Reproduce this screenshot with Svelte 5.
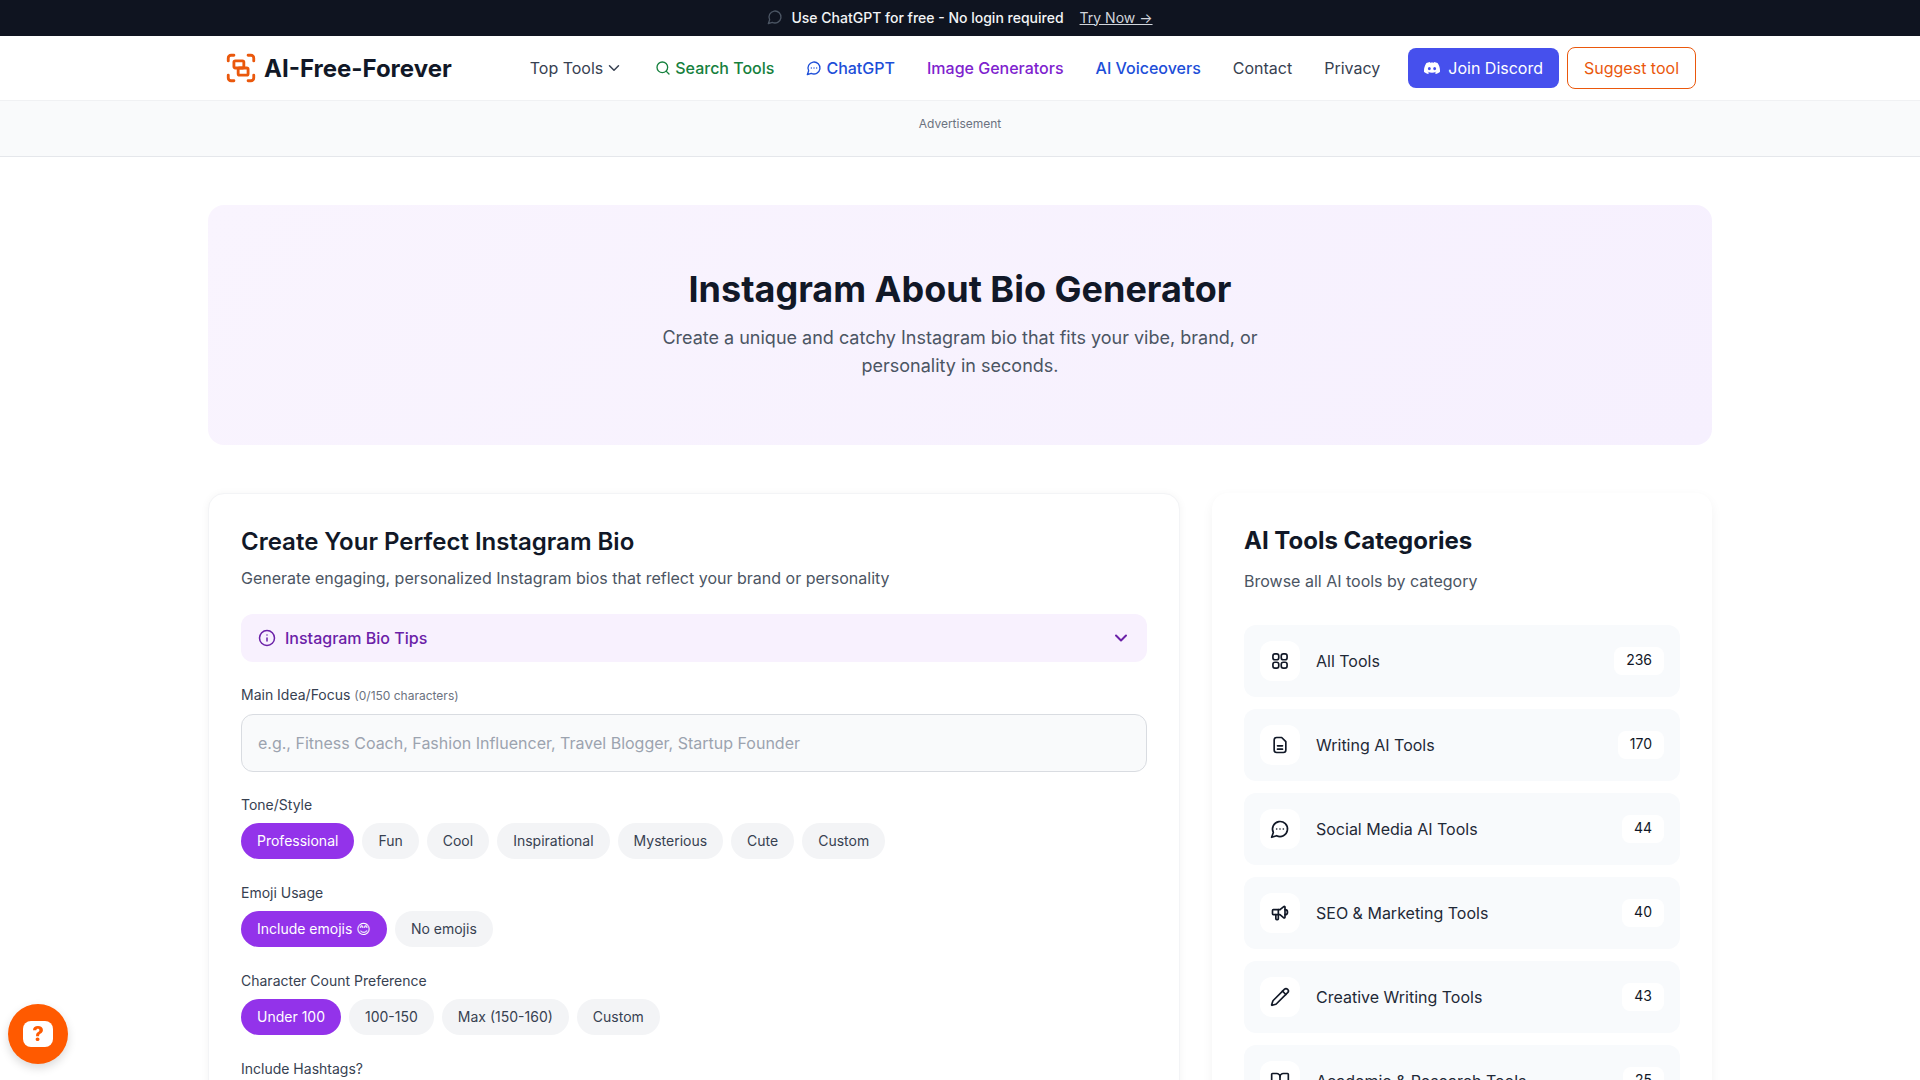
<script>
  const groups = [
    { label: 'Tone/Style', options: ['Professional', 'Fun', 'Cool', 'Inspirational', 'Mysterious', 'Cute', 'Custom'] },
    { label: 'Emoji Usage', options: ['Include emojis 😊', 'No emojis'] },
    { label: 'Character Count Preference', options: ['Under 100', '100-150', 'Max (150-160)', 'Custom'] },
    { label: 'Include Hashtags?', options: ['Yes', 'No'] }
  ];

  const categories = [
    { name: 'All Tools', count: 236, icon: 'grid' },
    { name: 'Writing AI Tools', count: 170, icon: 'file' },
    { name: 'Social Media AI Tools', count: 44, icon: 'chat' },
    { name: 'SEO & Marketing Tools', count: 40, icon: 'megaphone' },
    { name: 'Creative Writing Tools', count: 43, icon: 'pencil' },
    { name: 'Academic & Research Tools', count: 25, icon: 'book' }
  ];
</script>

<div class="page">
  <div class="banner">
    <svg class="banner-icon" viewBox="0 0 24 24" fill="none" stroke="currentColor" stroke-width="2" stroke-linecap="round" stroke-linejoin="round"><path d="M7.9 20A9 9 0 1 0 4 16.1L2 22Z" /></svg>
    <span>Use ChatGPT for free - No login required</span>
    <a href="#try">Try Now →</a>
  </div>

  <header class="nav">
    <div class="nav-inner">
      <a class="logo" href="#home">
        <svg viewBox="0 0 24 24" fill="none" stroke="#ea580c" stroke-width="2" stroke-linecap="round" stroke-linejoin="round"><path d="M3 7V5c0-1.1.9-2 2-2h2" /><path d="M17 3h2c1.1 0 2 .9 2 2v2" /><path d="M21 17v2c0 1.1-.9 2-2 2h-2" /><path d="M7 21H5c-1.1 0-2-.9-2-2v-2" /><rect width="7" height="5" x="7" y="7" rx="1" /><rect width="7" height="5" x="10" y="12" rx="1" /></svg>
        <span>AI-Free-Forever</span>
      </a>
      <nav class="links">
        <a href="#top" class="link tools">Top Tools
          <svg viewBox="0 0 24 24" fill="none" stroke="currentColor" stroke-width="2" stroke-linecap="round" stroke-linejoin="round"><path d="m6 9 6 6 6-6" /></svg>
        </a>
        <a href="#search" class="link strong green">
          <svg viewBox="0 0 24 24" fill="none" stroke="currentColor" stroke-width="2" stroke-linecap="round" stroke-linejoin="round"><circle cx="11" cy="11" r="8" /><path d="m21 21-4.3-4.3" /></svg>
          Search Tools
        </a>
        <a href="#chat" class="link strong blue">
          <svg viewBox="0 0 24 24" fill="none" stroke="currentColor" stroke-width="2" stroke-linecap="round" stroke-linejoin="round"><path d="M7.9 20A9 9 0 1 0 4 16.1L2 22Z" /><path d="M8 12h.01" /><path d="M12 12h.01" /><path d="M16 12h.01" /></svg>
          ChatGPT
        </a>
        <a href="#images" class="link strong purple">Image Generators</a>
        <a href="#voice" class="link strong blue">AI Voiceovers</a>
        <a href="#contact" class="link">Contact</a>
        <a href="#privacy" class="link">Privacy</a>
      </nav>
      <div class="actions">
        <a href="#discord" class="discord">
          <svg viewBox="0 0 24 24" fill="currentColor"><path d="M20.317 4.3698a19.7913 19.7913 0 00-4.8851-1.5152.0741.0741 0 00-.0785.0371c-.211.3753-.4447.8648-.6083 1.2495-1.8447-.2762-3.68-.2762-5.4868 0-.1636-.3933-.4058-.8742-.6177-1.2495a.077.077 0 00-.0785-.037 19.7363 19.7363 0 00-4.8852 1.515.0699.0699 0 00-.0321.0277C.5334 9.0458-.319 13.5799.0992 18.0578a.0824.0824 0 00.0312.0561c2.0528 1.5076 4.0413 2.4228 5.9929 3.0294a.0777.0777 0 00.0842-.0276c.4616-.6304.8731-1.2952 1.226-1.9942a.076.076 0 00-.0416-.1057c-.6528-.2476-1.2743-.5495-1.8722-.8923a.077.077 0 01-.0076-.1277c.1258-.0943.2517-.1923.3718-.2914a.0743.0743 0 01.0776-.0105c3.9278 1.7933 8.18 1.7933 12.0614 0a.0739.0739 0 01.0785.0095c.1202.099.246.1981.3728.2924a.077.077 0 01-.0066.1276 12.2986 12.2986 0 01-1.873.8914.0766.0766 0 00-.0407.1067c.3604.698.7719 1.3628 1.225 1.9932a.076.076 0 00.0842.0286c1.961-.6067 3.9495-1.5219 6.0023-3.0294a.077.077 0 00.0313-.0552c.5004-5.177-.8382-9.6739-3.5485-13.6604a.061.061 0 00-.0312-.0286zM8.02 15.3312c-1.1825 0-2.1569-1.0857-2.1569-2.419 0-1.3332.9555-2.4189 2.157-2.4189 1.2108 0 2.1757 1.0952 2.1568 2.419 0 1.3332-.9555 2.4189-2.1569 2.4189zm7.9748 0c-1.1825 0-2.1569-1.0857-2.1569-2.419 0-1.3332.9554-2.4189 2.1569-2.4189 1.2108 0 2.1757 1.0952 2.1568 2.419 0 1.3332-.946 2.4189-2.1568 2.4189Z" /></svg>
          Join Discord
        </a>
        <a href="#suggest" class="suggest">Suggest tool</a>
      </div>
    </div>
  </header>

  <div class="ad">Advertisement</div>

  <main class="container">
    <section class="hero">
      <h1>Instagram About Bio Generator</h1>
      <p>Create a unique and catchy Instagram bio that fits your vibe, brand, or personality in seconds.</p>
    </section>

    <div class="columns">
      <section class="card form">
        <h2>Create Your Perfect Instagram Bio</h2>
        <p class="lead">Generate engaging, personalized Instagram bios that reflect your brand or personality</p>

        <button class="tips">
          <span class="tips-title">
            <svg viewBox="0 0 24 24" fill="none" stroke="currentColor" stroke-width="2" stroke-linecap="round" stroke-linejoin="round"><circle cx="12" cy="12" r="10" /><path d="M12 16v-4" /><path d="M12 8h.01" /></svg>
            Instagram Bio Tips
          </span>
          <svg class="tips-chev" viewBox="0 0 24 24" fill="none" stroke="currentColor" stroke-width="2.4" stroke-linecap="round" stroke-linejoin="round"><path d="m6 9 6 6 6-6" /></svg>
        </button>

        <div class="field first">
          <div class="label">Main Idea/Focus <small>(0/150 characters)</small></div>
          <input type="text" placeholder="e.g., Fitness Coach, Fashion Influencer, Travel Blogger, Startup Founder" />
        </div>

        {#each groups as group, g}
          <div class="field" class:after-input={g === 0}>
            <div class="label">{group.label}</div>
            <div class="pills">
              {#each group.options as option, i}
                <button class="pill" class:active={i === 0}>{option}</button>
              {/each}
            </div>
          </div>
        {/each}
      </section>

      <aside class="card side">
        <h2>AI Tools Categories</h2>
        <p class="browse">Browse all AI tools by category</p>
        <div class="rows">
          {#each categories as cat}
            <a class="row" href="#cat">
              <span class="icon-box">
                <svg viewBox="0 0 24 24" fill="none" stroke="currentColor" stroke-width="2" stroke-linecap="round" stroke-linejoin="round">
                  {#if cat.icon === 'grid'}
                    <rect x="3.5" y="3.5" width="7" height="7" rx="2.5" /><rect x="13.5" y="3.5" width="7" height="7" rx="2.5" /><rect x="3.5" y="13.5" width="7" height="7" rx="2.5" /><rect x="13.5" y="13.5" width="7" height="7" rx="2.5" />
                  {:else if cat.icon === 'file'}
                    <path d="M14 3H8a3 3 0 0 0-3 3v12a3 3 0 0 0 3 3h8a3 3 0 0 0 3-3V8l-5-5Z" /><path d="M9 13h6" /><path d="M9 17h6" />
                  {:else if cat.icon === 'chat'}
                    <path d="M7.9 20A9 9 0 1 0 4 16.1L2 22Z" /><path d="M8 12h.01" /><path d="M12 12h.01" /><path d="M16 12h.01" />
                  {:else if cat.icon === 'megaphone'}
                    <path d="M18 8a3 3 0 0 1 0 6" /><path d="M10 8v11a1 1 0 0 1-1 1h-1a1 1 0 0 1-1-1v-5" /><path d="M12 8l4.524-3.77a.9.9 0 0 1 1.476.692v12.156a.9.9 0 0 1-1.476.692L12 14H4a1 1 0 0 1-1-1V9a1 1 0 0 1 1-1h8" />
                  {:else if cat.icon === 'pencil'}
                    <path d="M21.17 6.81a2.82 2.82 0 0 0-3.99-3.99L3.84 16.17a2 2 0 0 0-.5.83L2 21.34a.5.5 0 0 0 .62.62l4.35-1.32a2 2 0 0 0 .83-.5Z" /><path d="m15 5 4 4" />
                  {:else}
                    <path d="M12 7v14" /><path d="M3 18a1 1 0 0 1-1-1V4a1 1 0 0 1 1-1h5a4 4 0 0 1 4 4 4 4 0 0 1 4-4h5a1 1 0 0 1 1 1v13a1 1 0 0 1-1 1h-6a3 3 0 0 0-3 3 3 3 0 0 0-3-3Z" />
                  {/if}
                </svg>
              </span>
              <span class="row-name">{cat.name}</span>
              <span class="count">{cat.count}</span>
            </a>
          {/each}
        </div>
      </aside>
    </div>
  </main>

  <button class="help"><span>?</span></button>
</div>

<style>
  :global(body) {
    font-family: Inter, "DejaVu Sans", sans-serif;
    color: #111827;
    background: #fff;
  }
  .page {
    height: 100vh;
    overflow: hidden;
  }
  a {
    text-decoration: none;
    color: inherit;
  }
  button {
    font-family: inherit;
    border: none;
    cursor: pointer;
  }
  svg {
    display: block;
    flex: none;
  }

  .banner {
    box-sizing: border-box;
    height: 36px;
    padding-bottom: 2px;
    background: #0f1420;
    color: #f3f4f6;
    font-size: 14px;
    font-weight: 500;
    display: flex;
    align-items: center;
    justify-content: center;
  }
  .banner-icon {
    width: 16px;
    height: 16px;
    color: #4b5563;
    margin-right: 8px;
  }
  .banner a {
    margin-left: 16px;
    text-decoration: underline;
    font-weight: 400;
    color: #d1d5db;
  }

  .nav {
    height: 64px;
    border-bottom: 1px solid #f0f1f3;
  }
  .nav-inner {
    box-sizing: border-box;
    max-width: 1536px;
    height: 100%;
    margin: 0 auto;
    padding: 0 32px;
    display: flex;
    align-items: center;
  }
  .logo {
    display: flex;
    align-items: center;
    gap: 6px;
    font-size: 24px;
    font-weight: 700;
    color: #111827;
  }
  .logo svg {
    width: 34px;
    height: 34px;
  }
  .links {
    display: flex;
    align-items: center;
    gap: 32px;
    margin-left: 78px;
  }
  .link {
    display: flex;
    align-items: center;
    gap: 4px;
    font-size: 16px;
    color: #374151;
    white-space: nowrap;
  }
  .link svg {
    width: 16px;
    height: 16px;
  }
  .tools {
    gap: 2px;
  }
  .tools svg {
    width: 18px;
    height: 18px;
  }
  .strong {
    font-weight: 500;
  }
  .green {
    color: #15803d;
  }
  .blue {
    color: #1d4ed8;
  }
  .purple {
    color: #7e22ce;
  }
  .actions {
    display: flex;
    align-items: center;
    gap: 8px;
    margin-left: auto;
  }
  .discord {
    display: flex;
    align-items: center;
    gap: 8px;
    height: 40px;
    padding: 0 16px;
    border-radius: 8px;
    background: #4650ed;
    color: #fff;
    font-size: 16px;
  }
  .discord svg {
    width: 16px;
    height: 16px;
  }
  .suggest {
    display: flex;
    align-items: center;
    height: 40px;
    padding: 0 16px;
    border: 1px solid #ea580c;
    border-radius: 8px;
    color: #ea580c;
    font-size: 16px;
  }

  .ad {
    box-sizing: border-box;
    height: 56px;
    padding-top: 15px;
    background: #f9fafb;
    border-bottom: 1px solid #e5e7eb;
    text-align: center;
    font-size: 12px;
    line-height: 16px;
    color: #6b7280;
  }

  .container {
    box-sizing: border-box;
    max-width: 1536px;
    margin: 0 auto;
    padding: 48px 16px 0;
  }
  .hero {
    box-sizing: border-box;
    height: 240px;
    padding-top: 64px;
    border-radius: 16px;
    background: linear-gradient(135deg, #f9f4fe, #f6f0fe);
    text-align: center;
  }
  .hero h1 {
    margin: 0 0 15px;
    font-size: 36px;
    line-height: 40px;
    font-weight: 700;
    color: #111827;
  }
  .hero p {
    max-width: 672px;
    margin: 0 auto;
    font-size: 18px;
    line-height: 28px;
    color: #4b5563;
  }

  .columns {
    display: grid;
    grid-template-columns: 1fr 500px;
    gap: 32px;
    margin-top: 48px;
    align-items: start;
  }
  .card {
    box-sizing: border-box;
    border-radius: 16px;
    background: #fff;
    box-shadow: 0 1px 8px rgba(0, 0, 0, 0.05);
  }
  .form {
    border: 1px solid #f3f4f6;
    padding: 32px;
  }
  .form h2 {
    margin: 0 0 8px;
    font-size: 24px;
    line-height: 32px;
    font-weight: 600;
  }
  .lead {
    margin: 0 0 24px;
    font-size: 16px;
    line-height: 24px;
    color: #4b5563;
  }
  .tips {
    box-sizing: border-box;
    width: 100%;
    height: 48px;
    padding: 0 16px 0 17px;
    border-radius: 12px;
    background: #f8f1fe;
    color: #6b21a8;
    display: flex;
    align-items: center;
    justify-content: space-between;
  }
  .tips-title {
    display: flex;
    align-items: center;
    gap: 9px;
    font-size: 16px;
    font-weight: 500;
  }
  .tips-title svg {
    width: 18px;
    height: 18px;
  }
  .tips-chev {
    width: 20px;
    height: 20px;
  }
  .field {
    margin-top: 24px;
  }
  .field.first {
    margin-top: 23px;
  }
  .field.after-input {
    margin-top: 23px;
  }
  .label {
    margin-bottom: 8px;
    font-size: 14px;
    line-height: 20px;
    color: #374151;
  }
  .label small {
    font-size: 12px;
    color: #6b7280;
  }
  input {
    box-sizing: border-box;
    display: block;
    width: 100%;
    height: 58px;
    padding: 0 16px;
    border: 1px solid #d9dce1;
    border-radius: 12px;
    background: #f9fafb;
    font-family: inherit;
    font-size: 16px;
  }
  input::placeholder {
    color: #9ca3af;
  }
  .pills {
    display: flex;
    gap: 8px;
  }
  .pill {
    height: 36px;
    padding: 0 16px 1px;
    border-radius: 9999px;
    background: #f3f4f6;
    color: #374151;
    font-size: 14px;
  }
  .pill.active {
    background: #9333ea;
    color: #fff;
  }

  .side {
    padding: 32px;
    box-shadow: 0 4px 12px rgba(0, 0, 0, 0.05);
  }
  .side h2 {
    margin: 0 0 12px;
    font-size: 24px;
    line-height: 32px;
    font-weight: 700;
  }
  .browse {
    margin: 0 0 32px;
    font-size: 16px;
    line-height: 24px;
    color: #4b5563;
  }
  .rows {
    display: flex;
    flex-direction: column;
    gap: 12px;
  }
  .row {
    box-sizing: border-box;
    height: 72px;
    padding: 0 16px;
    border-radius: 12px;
    background: #f8fafc;
    display: flex;
    align-items: center;
    gap: 16px;
  }
  .icon-box {
    width: 40px;
    height: 40px;
    border-radius: 12px;
    background: #fff;
    display: flex;
    align-items: center;
    justify-content: center;
    color: #111827;
  }
  .icon-box svg {
    width: 20px;
    height: 20px;
  }
  .row-name {
    flex: 1;
    font-size: 16px;
    color: #1f2937;
  }
  .count {
    padding: 3px 12px 5px;
    border-radius: 8px;
    background: #fff;
    font-size: 14px;
    line-height: 20px;
    color: #111827;
  }

  .help {
    position: fixed;
    left: 8px;
    bottom: 16px;
    width: 60px;
    height: 60px;
    border-radius: 50%;
    background: #ff5a00;
    box-shadow: 0 4px 10px rgba(0, 0, 0, 0.15);
    display: flex;
    align-items: center;
    justify-content: center;
    padding: 0;
  }
  .help span {
    width: 30px;
    height: 26px;
    border-radius: 8px;
    background: #fff;
    color: #ff5a00;
    font-size: 20px;
    line-height: 26px;
    font-weight: 800;
    text-align: center;
  }
</style>
